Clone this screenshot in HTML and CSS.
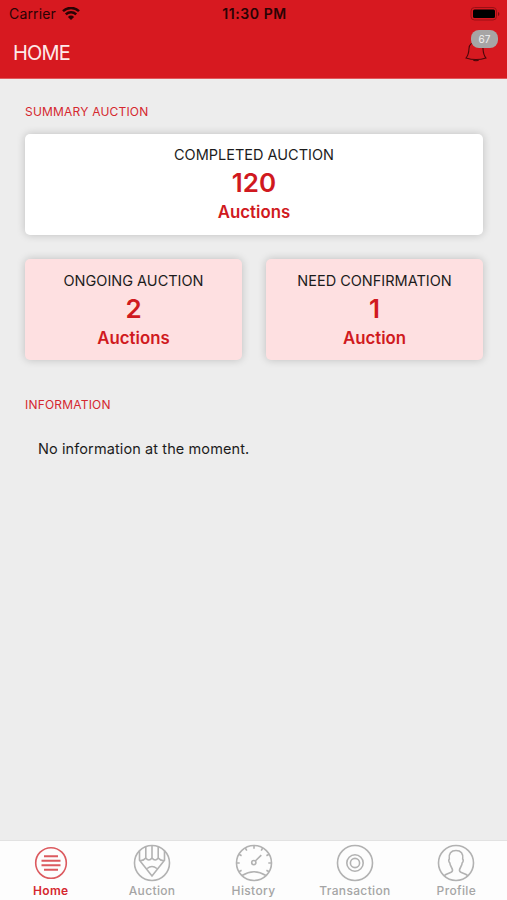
FILE: index.html
```html
<!DOCTYPE html>
<html lang="en">
<head>
    <meta charset="UTF-8">
    <meta name="viewport" content="width=device-width, initial-scale=1.0">
    <title>Home</title>
    <link rel="stylesheet" href="styles.css">
</head>
<body>
    <header class="header">
        <div class="status-bar">
            <div class="carrier">
                <span>Carrier</span>
                <svg class="wifi" viewBox="0 0 18 14" width="18" height="14">
                    <path d="M1 4.200a11.500 11.500 0 0 1 16 0M3.800 7.400a7.500 7.500 0 0 1 10.400 0" fill="none" stroke="currentColor" stroke-width="2.500"/>
                    <path d="M9 13 5.900 9.900a4.400 4.400 0 0 1 6.200 0z" fill="currentColor"/>
                </svg>
            </div>
            <div class="time">11:30 PM</div>
            <svg class="battery" viewBox="0 0 30 14" width="30" height="14">
                <rect x="1" y="0.5" width="25.500" height="12.500" rx="3.500" fill="none" stroke="#9b1015"/>
                <rect x="3" y="2.500" width="22" height="8.500" rx="1.500" fill="#000"/>
                <path d="M28 5v4q1.400-.6 1.400-2T28 5z" fill="#7d0c10"/>
            </svg>
        </div>
        <div class="title-bar">
            <h1>HOME</h1>
            <div class="bell">
                <svg viewBox="0 0 24 26" width="24" height="26">
                    <path d="M12 2.500c-4.200 0-6.800 2.200-7 6-.2 5-.8 7-3 9.500 5.800 1.800 14.200 1.800 20 0-2.200-2.500-2.800-4.500-3-9.500-.2-3.800-2.800-6-7-6zM9 19.300c.8 2 5.200 2 6 0" fill="none" stroke="#4a0709" stroke-width="1.100"/>
                </svg>
                <span class="badge">67</span>
            </div>
        </div>
    </header>

    <main class="content">
        <h2>SUMMARY AUCTION</h2>
        <div class="cards">
            <div class="card completed">
                <div class="label">COMPLETED AUCTION</div>
                <div class="count">120</div>
                <div class="unit">Auctions</div>
            </div>
            <div class="card">
                <div class="label">ONGOING AUCTION</div>
                <div class="count">2</div>
                <div class="unit">Auctions</div>
            </div>
            <div class="card">
                <div class="label">NEED CONFIRMATION</div>
                <div class="count">1</div>
                <div class="unit">Auction</div>
            </div>
        </div>

        <h2>INFORMATION</h2>
        <p class="info">No information at the moment.</p>
    </main>

    <nav class="tabs">
        <a class="tab active">
            <svg viewBox="0 0 38 38">
                <circle cx="19" cy="19" r="15.300"/>
                <path d="M12 12.300h14M9.500 16.800h19M9.500 21.200h19M12 25.700h14" stroke-width="1.900"/>
            </svg>
            <span>Home</span>
        </a>
        <a class="tab">
            <svg viewBox="0 0 38 38">
                <circle cx="19" cy="19" r="17.500"/>
                <path d="M6.500 6.500v9.800L19 32l12.500-15.700V6.500M12.800 3v11M19 1.500V14M25.200 3v11M6.500 16.300q3.800.8 6.300-2.300 3 4 6.200 0 3.200 4 6.200 0 2.500 3.100 6.300 2.300M14.200 24.500q4.800-4 9.600 0"/>
            </svg>
            <span>Auction</span>
        </a>
        <a class="tab">
            <svg viewBox="0 0 38 38">
                <circle cx="19" cy="19" r="17.500"/>
                <circle cx="18.800" cy="18.600" r="2.100"/>
                <path d="M20.300 17l6-5.800M7 31.500q12-7.500 24 0M19 1.500v3.200M1.500 19h3.200M33.300 19h3.200M10.300 4l1.500 2.600M27.700 4l-1.500 2.600M4 10.300l2.600 1.500M34 10.300l-2.600 1.500M4 27.700l2.600-1.500M34 27.700l-2.600-1.500"/>
            </svg>
            <span>History</span>
        </a>
        <a class="tab">
            <svg viewBox="0 0 38 38">
                <circle cx="19" cy="19" r="17.500"/>
                <circle cx="19" cy="19" r="8.200"/>
                <circle cx="19" cy="19" r="4.600"/>
            </svg>
            <span>Transaction</span>
        </a>
        <a class="tab">
            <svg viewBox="0 0 38 38">
                <circle cx="19" cy="19" r="17.500"/>
                <path d="M7 31.800c3-2.800 8.500-2.600 8.500-5.300 0-3-2.500-4-2.700-7.700-1.300-1-1.200-3.300-.5-3.800C11.500 9.500 14 6.500 19 6.500s7.500 3 6.700 8.500c.7.500.8 2.800-.5 3.800-.2 3.700-2.700 4.700-2.700 7.700 0 2.700 5.500 2.500 8.500 5.300"/>
            </svg>
            <span>Profile</span>
        </a>
    </nav>
</body>
</html>
```

FILE: styles.css
```css
* {
    box-sizing: border-box;
}

body {
    font-family: Inter, "Liberation Sans", sans-serif;
    background-color: #ededed;
    color: #1c1c1c;
    margin: 0;
    height: 100vh;
    display: flex;
    flex-direction: column;
}

.header {
    background: #d71920;
    height: 79px;
    border-bottom: 1px solid #e0595d;
}

.status-bar {
    display: grid;
    grid-template-columns: 1fr auto 1fr;
    align-items: center;
    height: 27px;
    padding: 0 7px 0 9px;
    color: #2a0304;
}

.carrier {
    display: flex;
    align-items: center;
    gap: 6px;
    font-size: 14px;
    letter-spacing: 0.15px;
}

.time {
    font-size: 14px;
    font-weight: 600;
    letter-spacing: 0.6px;
}

.battery {
    justify-self: end;
}

.title-bar {
    display: flex;
    justify-content: space-between;
    align-items: center;
    height: 52px;
    padding: 0 19px 0 13px;
}

h1 {
    margin: 0;
    font-size: 20px;
    font-weight: 400;
    letter-spacing: -0.8px;
    color: #fde9e9;
}

.bell {
    position: relative;
    height: 26px;
}

.badge {
    position: absolute;
    top: -10px;
    left: 7px;
    width: 27px;
    height: 18px;
    border-radius: 8px;
    background: #a7a5a5;
    color: #f1f1f1;
    font-size: 10px;
    line-height: 18px;
    text-align: center;
}

.content {
    flex: 1;
    padding: 25px 24px 0 25px;
}

h2 {
    margin: 0;
    font-size: 12px;
    font-weight: 400;
    line-height: 16px;
    letter-spacing: 0.2px;
    color: #d5282f;
}

.cards {
    display: grid;
    grid-template-columns: 1fr 1fr;
    gap: 24px;
    margin: 14px 0 37px;
}

.card {
    height: 101px;
    padding-top: 12px;
    border-radius: 5px;
    background: #fee0e1;
    box-shadow: 0 0 8px rgba(0, 0, 0, 0.2);
    text-align: center;
}

.completed {
    grid-column: 1 / 3;
    padding-top: 11px;
    background: #fff;
}

.label {
    font-size: 14.5px;
    line-height: 19px;
}

.count {
    font-size: 26px;
    font-weight: 600;
    line-height: 37px;
    color: #d01920;
}

.unit {
    font-size: 16.8px;
    font-weight: 600;
    line-height: 22px;
    color: #d01920;
}

.info {
    margin: 26px 0 0 13px;
    font-size: 14.5px;
    line-height: 20px;
    letter-spacing: 0.1px;
}

.tabs {
    display: flex;
    height: 60px;
    background: #fdfdfd;
    border-top: 1px solid #e2e2e2;
}

.tab {
    flex: 1;
    display: flex;
    flex-direction: column;
    align-items: center;
    padding-top: 3px;
    color: #a5a5a5;
    font-size: 12px;
    font-weight: 500;
    line-height: 18px;
    letter-spacing: 0.35px;
}

.tab svg {
    width: 38px;
    height: 38px;
    fill: none;
    stroke: #b2b2b2;
    stroke-width: 1.6;
}

.tab.active {
    color: #d5282f;
    font-weight: 600;
}

.tab.active svg {
    stroke: #dc5a5f;
}
```
